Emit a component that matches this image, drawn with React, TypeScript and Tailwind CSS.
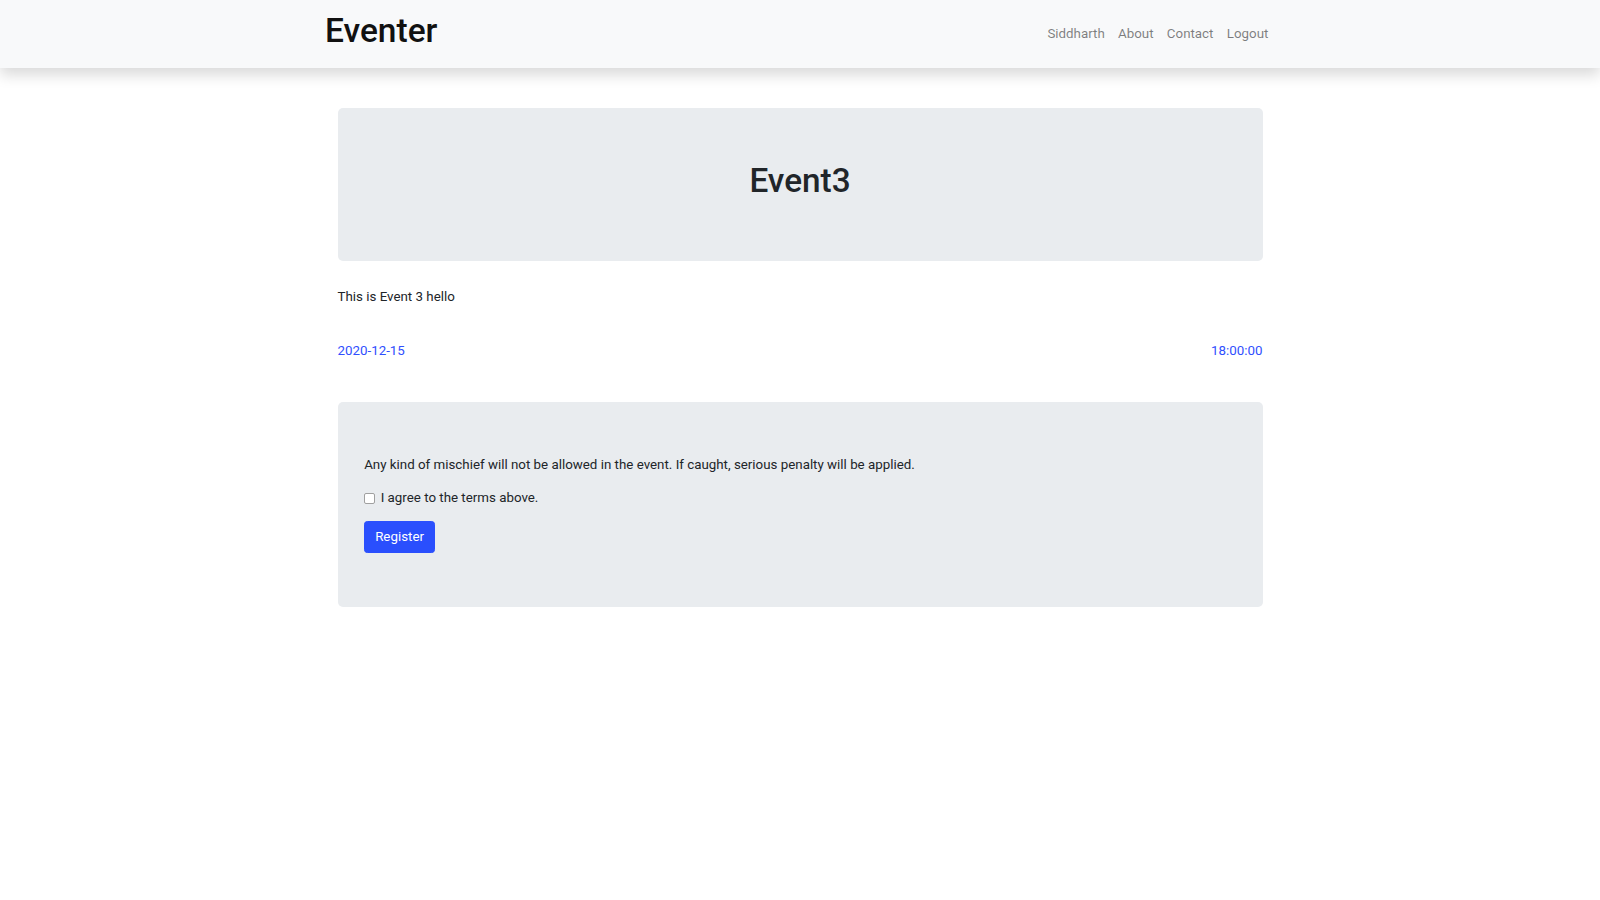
import React from 'react';

const navLinks = ['Siddharth', 'About', 'Contact', 'Logout'];

function Navbar() {
  return (
    <nav className="relative z-10 h-[68px] bg-[#f8f9fa] shadow-[0_6.67px_13.33px_rgba(0,0,0,0.15)]">
      <div className="mx-auto flex h-full w-[950px] items-center justify-between">
        <a href="#" className="pb-[7px] text-[33.5px] font-medium leading-[40px] text-[#111]">
          Eventer
        </a>
        <ul className="flex items-center">
          {navLinks.map((link) => (
            <li key={link}>
              <a href="#" className="block px-[6.67px] py-[6.67px] text-black/50 hover:text-black/70">
                {link}
              </a>
            </li>
          ))}
        </ul>
      </div>
    </nav>
  );
}

export default function App() {
  return (
    <div className="min-h-screen bg-white font-['Roboto','Liberation_Sans',sans-serif] text-[13.33px] leading-[20px] text-[#212529]">
      <Navbar />

      <main className="mx-auto w-[925px] pt-[39.5px]">
        <div className="mb-[26.67px] rounded-[5px] bg-[#e9ecef] px-[26.67px] py-[53.33px]">
          <h1 className="mb-[6.67px] text-center text-[33.33px] font-medium leading-[40px]">Event3</h1>
        </div>

        <p>This is Event 3 hello</p>

        <div className="mb-[41px] mt-[33.33px] flex justify-between text-[#304ffe]">
          <span>2020-12-15</span>
          <span>18:00:00</span>
        </div>

        <div className="rounded-[5px] bg-[#e9ecef] px-[26.67px] py-[53.33px]">
          <p className="mb-[13.33px]">
            Any kind of mischief will not be allowed in the event. If caught, serious penalty will be applied.
          </p>
          <label className="mb-[13px] flex items-center">
            <input
              type="checkbox"
              className="mr-[5.5px] h-[11px] w-[11px] appearance-none rounded-[2px] border border-[#a0a0a0] bg-white"
            />
            <span>I agree to the terms above.</span>
          </label>
          <button
            type="button"
            className="rounded-[3.33px] border border-[#2a4ffd] bg-[#2a4ffd] px-[10px] py-[5px] leading-[20px] text-white"
          >
            Register
          </button>
        </div>
      </main>
    </div>
  );
}
